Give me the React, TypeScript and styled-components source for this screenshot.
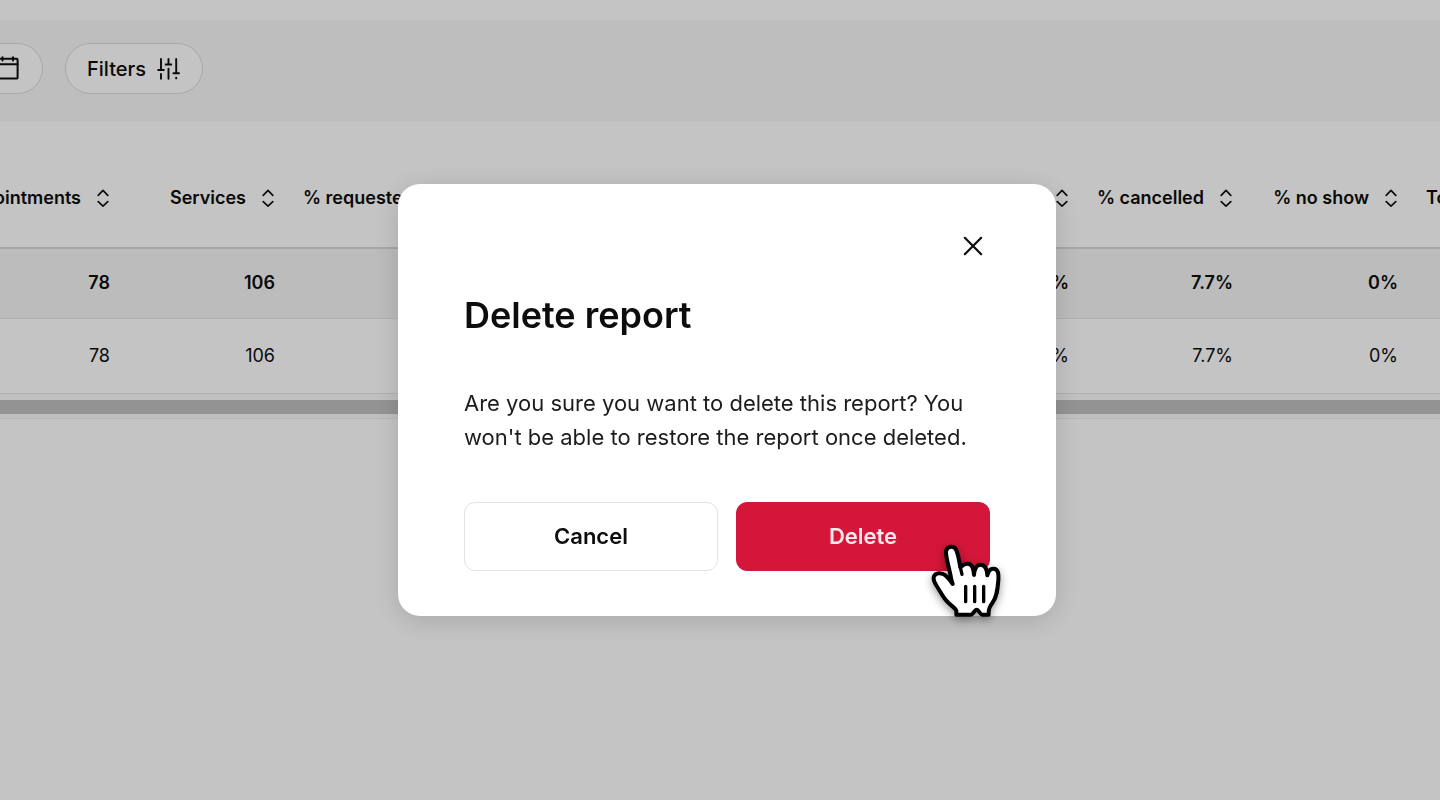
import React from "react";
import styled, { createGlobalStyle } from "styled-components";

const GlobalStyle = createGlobalStyle`
  *, *::before, *::after { box-sizing: border-box; }
  html, body { margin: 0; }
  body {
    background: #fff;
    color: #0d0d0d;
    font-family: Inter, "Liberation Sans", sans-serif;
    overflow: hidden;
  }
  button { font: inherit; color: inherit; cursor: pointer; }
`;

const Page = styled.div`
  min-height: 100vh;
  padding-top: 20px;
  overflow: hidden;
`;

const Toolbar = styled.div`
  display: flex;
  align-items: center;
  gap: 22px;
  height: 102px;
  padding-bottom: 6px;
  background: #f8f8f8;
`;

const Pill = styled.button<{ $cut?: boolean }>`
  display: flex;
  align-items: center;
  gap: 10px;
  height: 51px;
  margin-left: ${(p) => (p.$cut ? "-28px" : "0")};
  padding: 2px 22px 0 ${(p) => (p.$cut ? "22px" : "21px")};
  border: 1px solid #dadada;
  border-radius: 26px;
  background: #fff;
  font-size: 20px;
  font-weight: 500;
`;

const TableArea = styled.main`
  padding-top: 48px;
`;

const Table = styled.table`
  width: 100%;
  table-layout: fixed;
  border-collapse: collapse;
  font-size: 18px;
`;

const Col = styled.col<{ $width?: number }>`
  width: ${(p) => (p.$width ? `${p.$width}px` : "auto")};
`;

const HeadCell = styled.th`
  height: 78px;
  padding: 15px 15px 0 14px;
  border-bottom: 2px solid #d9d9d9;
  font-weight: 600;
  vertical-align: top;
  white-space: nowrap;
`;

const SortButton = styled.button<{ $start?: boolean }>`
  display: flex;
  align-items: center;
  justify-content: ${(p) => (p.$start ? "flex-start" : "flex-end")};
  gap: 16px;
  width: 100%;
  height: 26px;
  padding: 0;
  border: 0;
  background: none;
  line-height: 26px;

  svg { flex: none; }
`;

const Row = styled.tr<{ $total?: boolean }>`
  height: ${(p) => (p.$total ? "70px" : "75px")};
  background: ${(p) => (p.$total ? "#f5f5f5" : "#fff")};
  border-bottom: 1px solid #e6e6e6;
  font-weight: ${(p) => (p.$total ? 600 : 400)};
`;

const Cell = styled.td`
  padding: 0 14px 1px;
  text-align: right;
`;

const ScrollTrack = styled.div`
  height: 25px;
  padding: 6px 0;
  border-bottom: 1px solid #eee;
  background: #fafafa;
`;

const ScrollThumb = styled.div`
  height: 14px;
  background: #c0c0c0;
`;

const Overlay = styled.div`
  position: fixed;
  inset: 0;
  display: flex;
  align-items: center;
  justify-content: center;
  padding-left: 14px;
  background: rgba(0, 0, 0, 0.23);
`;

const Dialog = styled.section`
  position: relative;
  display: flex;
  flex-direction: column;
  width: 658px;
  max-width: 100%;
  padding: 45px 66px;
  border-radius: 22px;
  background: #fff;
  box-shadow: 0 5px 28px rgba(0, 0, 0, 0.15);
`;

const CloseButton = styled.button`
  display: flex;
  align-items: center;
  justify-content: center;
  align-self: flex-end;
  width: 34px;
  height: 34px;
  padding: 0;
  border: 0;
  background: none;
`;

const Title = styled.h2`
  margin: 29px 0 48px;
  font-size: 36px;
  font-weight: 600;
  line-height: 46px;
`;

const Message = styled.p`
  margin: 0 0 48px;
  color: #1c1c1c;
  font-size: 22px;
  line-height: 34px;
`;

const Actions = styled.div`
  display: grid;
  grid-template-columns: 1fr 1fr;
  gap: 18px;
`;

const ActionButton = styled.button<{ $danger?: boolean }>`
  height: 69px;
  padding: 0 0 2px;
  border: 1px solid ${(p) => (p.$danger ? "#d4163a" : "#e2e2e2")};
  border-radius: 11px;
  background: ${(p) => (p.$danger ? "#d4163a" : "#fff")};
  color: ${(p) => (p.$danger ? "#fbe9ec" : "#0d0d0d")};
  font-size: 22px;
  font-weight: 600;
`;

const Pointer = styled.svg`
  position: absolute;
  right: 52px;
  bottom: -4px;
  overflow: visible;
  filter: drop-shadow(0 3px 4px rgba(0, 0, 0, 0.4));
  pointer-events: none;
`;

const SortIcon = () => (
  <svg width="12" height="20" viewBox="0 0 12 20" fill="none" stroke="#111" strokeWidth="1.7" strokeLinecap="round" strokeLinejoin="round" aria-hidden="true">
    <path d="M1.2 7.3 L6 2.4 L10.8 7.3 M1.2 13.6 L6 18.2 L10.8 13.6" />
  </svg>
);

const CalendarIcon = () => (
  <svg width="25" height="26" viewBox="0 0 25 26" fill="none" stroke="#0d0d0d" strokeWidth="2" strokeLinecap="round" strokeLinejoin="round" aria-hidden="true">
    <rect x="2" y="2.8" width="20.6" height="19.8" rx="1.2" />
    <path d="M2 8.2 H22.6 M7.5 1.2 V4.4 M18 1.2 V4.4" />
  </svg>
);

const FilterIcon = () => (
  <svg width="24" height="24" viewBox="0 0 24 24" fill="none" stroke="#0d0d0d" strokeWidth="1.9" strokeLinecap="round" aria-hidden="true">
    <path d="M5 2 V13 M2.2 13 H7.8 M5 17 V21.8 M12.5 2 V7.5 M9.7 7.5 H15.3 M12.5 11.6 V21.8 M20.2 2 V16.3 M17.4 16.3 H23 M20.2 20.6 V21.4" />
  </svg>
);

const HandPointer = () => (
  <Pointer width="74" height="78" viewBox="90 185 222 234" fill="none" stroke="#000" strokeLinecap="round" strokeLinejoin="round" aria-hidden="true">
    <path
      fill="#fff"
      strokeWidth="12"
      d="M158 311 C152 303 145 292 136 285 C124 275 107 277 102 288 C98 298 104 308 110 317 C120 332 127 347 139 361 C149 373 164 381 169 391 L169 403 H212 C220 403 223 388 230 388 C237 388 239 403 247 403 L266 403 C265 390 268 379 277 368 C291 350 293 325 295 300 C296 283 296 265 280 265 C271 265 265 272 262 285 C261 266 254 253 241 253 C229 253 224 263 222 284 C221 264 214 250 202 250 C193 250 187 255 181 261 C178 243 175 225 169 210 C163 195 143 196 138 212 C136 226 147 262 151 282 C153 294 155 303 158 311 Z"
    />
    <path strokeWidth="10" d="M181 261 L186 282 M197 318 V364 M224 318 V364 M251 318 V364" />
  </Pointer>
);

type Column = { label: string; total: string; value: string; width?: number; start?: boolean };

const columns: Column[] = [
  { label: "Appointments", total: "78", value: "78", width: 124 },
  { label: "Services", total: "106", value: "106", width: 165 },
  { label: "% requested", total: "", value: "", start: true },
  { label: "", total: "%", value: "%", width: 164 },
  { label: "% cancelled", total: "7.7%", value: "7.7%", width: 164 },
  { label: "% no show", total: "0%", value: "0%", width: 165 },
  { label: "Total", total: "", value: "", width: 28, start: true },
];

export default function App() {
  return (
    <>
      <GlobalStyle />
      <Page>
        <Toolbar>
          <Pill $cut aria-label="Date range">
            <CalendarIcon />
          </Pill>
          <Pill>
            Filters
            <FilterIcon />
          </Pill>
        </Toolbar>
        <TableArea>
          <Table>
            <colgroup>
              {columns.map((c, i) => (
                <Col key={i} $width={c.width} />
              ))}
            </colgroup>
            <thead>
              <tr>
                {columns.map((c, i) => (
                  <HeadCell key={i} scope="col">
                    <SortButton $start={c.start} aria-label={c.label || "Sort"}>
                      {c.label && <span>{c.label}</span>}
                      <SortIcon />
                    </SortButton>
                  </HeadCell>
                ))}
              </tr>
            </thead>
            <tbody>
              <Row $total>
                {columns.map((c, i) => (
                  <Cell key={i}>{c.total}</Cell>
                ))}
              </Row>
              <Row>
                {columns.map((c, i) => (
                  <Cell key={i}>{c.value}</Cell>
                ))}
              </Row>
            </tbody>
          </Table>
          <ScrollTrack>
            <ScrollThumb />
          </ScrollTrack>
        </TableArea>
      </Page>
      <Overlay>
        <Dialog role="dialog" aria-modal="true" aria-labelledby="dialog-title" aria-describedby="dialog-message">
          <CloseButton aria-label="Close">
            <svg width="20" height="20" viewBox="0 0 20 20" fill="none" stroke="#0d0d0d" strokeWidth="2.2" strokeLinecap="round" aria-hidden="true">
              <path d="M1.8 1.8 L18.2 18.2 M18.2 1.8 L1.8 18.2" />
            </svg>
          </CloseButton>
          <Title id="dialog-title">Delete report</Title>
          <Message id="dialog-message">
            Are you sure you want to delete this report? You won't be able to restore the report once deleted.
          </Message>
          <Actions>
            <ActionButton>Cancel</ActionButton>
            <ActionButton $danger>Delete</ActionButton>
          </Actions>
          <HandPointer />
        </Dialog>
      </Overlay>
    </>
  );
}
